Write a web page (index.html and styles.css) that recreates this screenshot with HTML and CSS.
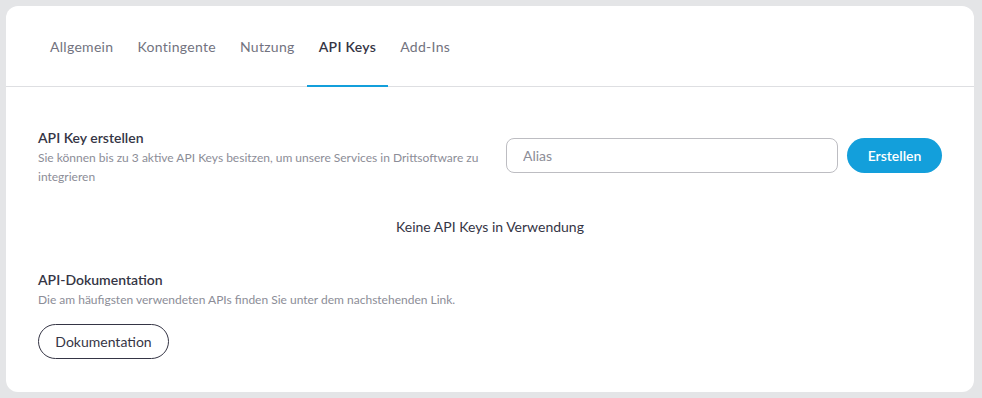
FILE: index.html
```html
<!DOCTYPE html>
<html>
<head>
    <title>API Keys</title>
    <link rel="stylesheet" href="styles.css">
</head>
<body>
    <div class="card">
        <nav class="tabs">
            <a class="tab">Allgemein</a>
            <a class="tab">Kontingente</a>
            <a class="tab">Nutzung</a>
            <a class="tab active">API Keys</a>
            <a class="tab">Add-Ins</a>
        </nav>
        <div class="content">
            <div class="create-row">
                <div class="text-block">
                    <h3 class="title">API Key erstellen</h3>
                    <p class="desc">Sie können bis zu 3 aktive API Keys besitzen, um unsere Services in Drittsoftware zu integrieren</p>
                </div>
                <div class="form">
                    <input type="text" class="alias" placeholder="Alias">
                    <button class="btn-primary">Erstellen</button>
                </div>
            </div>
            <p class="empty">Keine API Keys in Verwendung</p>
            <div class="docs">
                <h3 class="title">API-Dokumentation</h3>
                <p class="desc">Die am häufigsten verwendeten APIs finden Sie unter dem nachstehenden Link.</p>
                <button class="btn-outline">Dokumentation</button>
            </div>
        </div>
    </div>
</body>
</html>
```

FILE: styles.css
```css
body {
    margin: 0;
    padding: 6px 8px 6px 6px;
    background-color: #e4e5e7;
    font-family: Lato, "Open Sans", sans-serif;
}
.card {
    background-color: #ffffff;
    border-radius: 12px;
    height: 386px;
    box-sizing: border-box;
}
.tabs {
    display: flex;
    padding: 0 32px;
    border-bottom: 1px solid #dedfe2;
    height: 80px;
    align-items: stretch;
}
.tab {
    display: flex;
    align-items: center;
    padding: 0 12px;
    font-size: 14px;
    letter-spacing: 0.3px;
    color: #727380;
    border-bottom: 2px solid transparent;
    margin-bottom: -1px;
    padding-top: 1px;
}
.tab.active {
    color: #353545;
    font-weight: 600;
    border-bottom-color: #139fdb;
}
.content {
    padding: 0 32px;
}
.create-row {
    display: flex;
    justify-content: space-between;
    align-items: center;
    padding-top: 41px;
}
.text-block {
    width: 450px;
}
.title {
    margin: 0;
    font-size: 14px;
    font-weight: 600;
    color: #353545;
    line-height: 20px;
}
.desc {
    margin: 0;
    font-size: 12px;
    color: #8c8d97;
    line-height: 19px;
}
.form {
    display: flex;
    gap: 9px;
    margin-bottom: 4px;
}
.alias {
    width: 332px;
    height: 35px;
    box-sizing: border-box;
    border: 1px solid #bdbdc2;
    border-radius: 8px;
    padding: 0 16px;
    font-family: inherit;
    font-size: 14px;
    outline: none;
}
.alias::placeholder {
    color: #8c8d97;
}
.btn-primary {
    width: 95px;
    height: 35px;
    border: none;
    border-radius: 18px;
    background-color: #139fdb;
    color: #ffffff;
    font-family: inherit;
    font-size: 14px;
    font-weight: 600;
}
.empty {
    margin: 32px 0 0;
    text-align: center;
    font-size: 14px;
    color: #353545;
}
.docs {
    margin-top: 35px;
}
.btn-outline {
    margin-top: 15px;
    width: 131px;
    height: 35px;
    border: 1px solid #353545;
    border-radius: 18px;
    background-color: #ffffff;
    color: #353545;
    font-family: inherit;
    font-size: 14px;
}
```
